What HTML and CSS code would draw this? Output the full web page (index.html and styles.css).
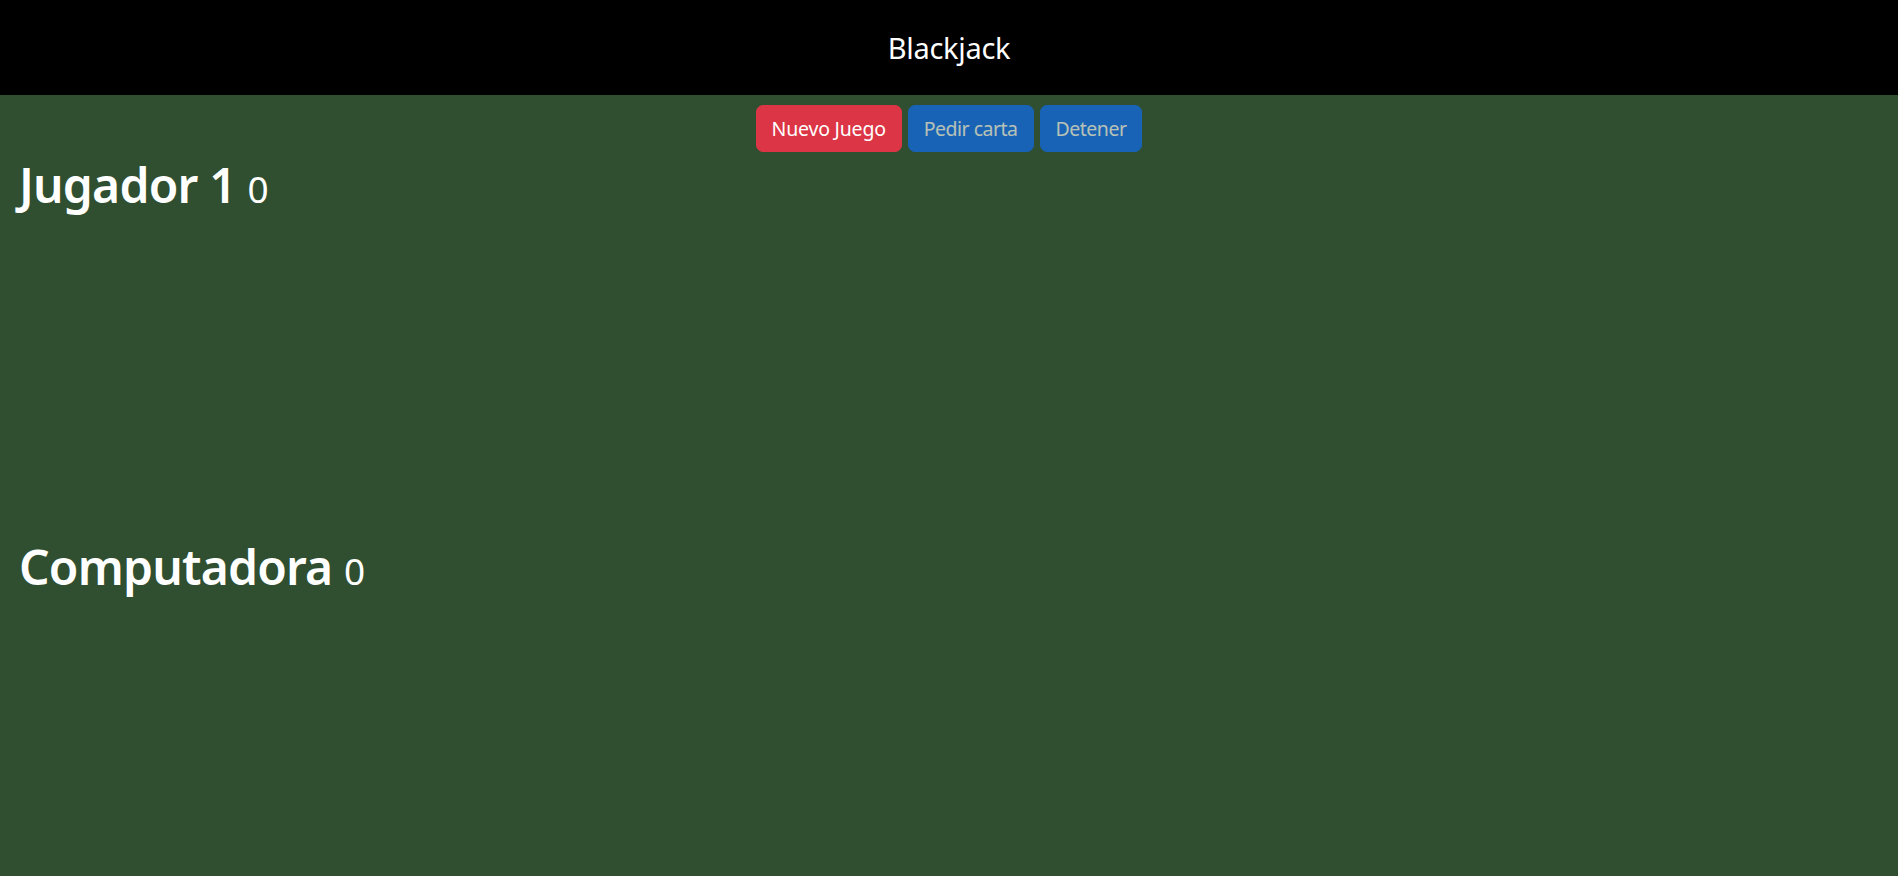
FILE: index.html
```html
<!DOCTYPE html>
<html lang="es">
<head>
<meta charset="utf-8">
<title>Blackjack</title>
<link rel="stylesheet" href="styles.css">
</head>
<body>
<header class="topbar">
  <h1 class="title">Blackjack</h1>
</header>
<main class="table">
  <div class="controls">
    <button class="btn btn-danger">Nuevo Juego</button>
    <button class="btn btn-primary" disabled>Pedir carta</button>
    <button class="btn btn-primary" disabled>Detener</button>
  </div>
  <section class="player">
    <h2 class="player-name">Jugador 1 <small class="score">0</small></h2>
    <div class="cards"></div>
  </section>
  <section class="player">
    <h2 class="player-name">Computadora <small class="score">0</small></h2>
    <div class="cards cards-last"></div>
  </section>
</main>
</body>
</html>
```
FILE: styles.css
```css
html, body {
  margin: 0;
  padding: 0;
}
body {
  background: #2f4f30;
  color: #fff;
  font-family: "Noto Sans", "Open Sans", sans-serif;
  min-height: 100vh;
}
.topbar {
  background: #000;
  height: 95px;
  display: flex;
  align-items: center;
  justify-content: center;
}
.title {
  margin: 0;
  font-size: 29px;
  font-weight: 400;
  line-height: 1;
  letter-spacing: -0.3px;
}
.table {
  padding: 0 19px;
}
.controls {
  display: flex;
  justify-content: center;
  gap: 6px;
  padding-top: 10px;
}
.btn {
  font-family: inherit;
  font-size: 19.5px;
  line-height: 30px;
  padding: 7.5px 15px;
  border: 1.25px solid transparent;
  border-radius: 7px;
  color: #fff;
  cursor: pointer;
  letter-spacing: -0.2px;
}
.btn-danger {
  background: #dc3545;
  border-color: #dc3545;
}
.btn-primary {
  background: #0d6efd;
  border-color: #0d6efd;
  letter-spacing: -0.5px;
}
.btn:disabled {
  opacity: 0.65;
  cursor: default;
}
.player-name {
  margin: 3px 0 10px;
  font-size: 48px;
  font-weight: 600;
  line-height: 60px;
  letter-spacing: -0.8px;
}
.score {
  font-size: 37px;
  font-weight: 400;
  letter-spacing: 0;
}
.cards {
  height: 305px;
}
.cards-last {
  height: 200px;
}
```
